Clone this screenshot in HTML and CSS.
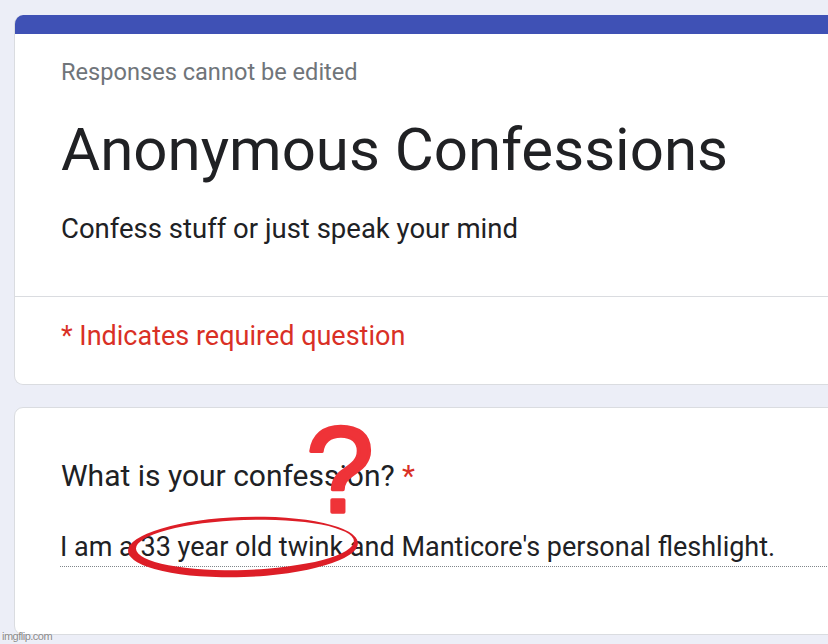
FILE: index.html
```html
<!DOCTYPE html>
<html>
<head>
<meta charset="utf-8">
<link rel="stylesheet" href="styles.css">
</head>
<body>
<div class="page">
  <div class="card header-card">
    <div class="bar"></div>
    <div class="head">
      <div class="note">Responses cannot be edited</div>
      <h1 class="title">Anonymous Confessions</h1>
      <div class="desc">Confess stuff or just speak your mind</div>
    </div>
    <div class="required">* Indicates required question</div>
  </div>
  <div class="card question-card">
    <div class="qtitle">What is your confession? <span class="star">*</span></div>
    <div class="answer">I am a 33 year old twink and Manticore's personal fleshlight.</div>
  </div>
</div>
<svg class="markup" width="828" height="644" viewBox="0 0 828 644">
  <g transform="rotate(-2 243 547)">
    <path fill="#dd1e27" fill-rule="evenodd" d="M128 547 A115 30 0 1 0 358 547 A115 30 0 1 0 128 547 Z M136 545 A109 25 0 1 1 354 545 A109 25 0 1 1 136 545 Z"/>
  </g>
  <text x="306" y="512" class="qmark">?</text>
</svg>
<div class="watermark">imgflip.com</div>
</body>
</html>
```
FILE: styles.css
```css
html, body {
  margin: 0;
  padding: 0;
  overflow: hidden;
}
body {
  width: 828px;
  height: 644px;
  background: #eceef7;
  font-family: Roboto, "Liberation Sans", sans-serif;
  position: relative;
}
.page {
  padding: 15px 0 0 14px;
  display: flex;
  flex-direction: column;
  gap: 22px;
}
.card {
  width: 880px;
  background: #fff;
  border: 1px solid #dadce0;
  border-radius: 9px;
  box-sizing: border-box;
  overflow: hidden;
}
.header-card {
  border-top: none;
}
.bar {
  height: 19px;
  background: #3f51b5;
}
.head {
  padding: 23px 0 0 46px;
  height: 263px;
  box-sizing: border-box;
  border-bottom: 1px solid #dadce0;
}
.note {
  font-size: 23.6px;
  line-height: 30px;
  color: #70757a;
}
.title {
  margin: 28px 0 0 0;
  font-weight: 400;
  font-size: 60px;
  line-height: 70px;
  color: #202124;
}
.desc {
  margin-top: 28px;
  font-size: 27.5px;
  line-height: 32px;
  color: #202124;
}
.required {
  padding: 23px 0 0 46px;
  height: 87px;
  box-sizing: border-box;
  font-size: 27px;
  line-height: 32px;
  color: #d93025;
}
.question-card {
  height: 228px;
  padding: 50px 0 0 46px;
}
.qtitle {
  font-size: 30px;
  line-height: 36px;
  color: #202124;
}
.star {
  color: #d93025;
}
.answer {
  margin-top: 37px;
  font-size: 27px;
  line-height: 32px;
  color: #202124;
  border-bottom: 1px dotted #80868b;
  padding-bottom: 3px;
  margin-left: -1px;
}
.markup {
  position: absolute;
  left: 0;
  top: 0;
}
.qmark {
  font-family: "Liberation Sans", Arial, sans-serif;
  font-weight: 400;
  font-size: 122px;
  fill: #ef3338;
  stroke: #ef3338;
  stroke-width: 3.5px;
  stroke-linejoin: round;
}
.watermark {
  position: absolute;
  left: 2px;
  bottom: 2px;
  font-family: "Liberation Sans", Arial, sans-serif;
  font-size: 11px;
  color: #8b8b8b;
  letter-spacing: -0.5px;
  text-shadow: 0 0 2px #fff;
}
```
